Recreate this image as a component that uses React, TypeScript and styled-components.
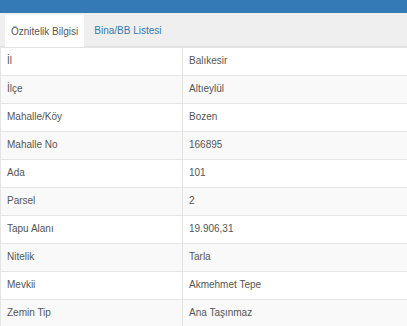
import { Fragment } from 'react';
import styled, { createGlobalStyle } from 'styled-components';

const GlobalStyle = createGlobalStyle`
  body {
    margin: 0;
    font-family: "Liberation Sans", Arial, sans-serif;
    background: #fff;
  }
`;

const Page = styled.div`
  width: 407px;
  height: 326px;
  overflow: hidden;
`;

const TopBar = styled.div`
  height: 13px;
  background: #337ab7;
`;

const Tabs = styled.div`
  display: flex;
  align-items: flex-end;
  height: 34px;
  padding-left: 5px;
  background: #efefef;
  border-bottom: 1px solid #e2e2e2;
  box-sizing: border-box;
`;

const Tab = styled.div<{ $active?: boolean }>`
  display: flex;
  align-items: center;
  margin-bottom: ${(p) => (p.$active ? '-1px' : '0')};
  font-size: 10px;
  color: ${(p) => (p.$active ? '#555' : '#337ab7')};
  background: ${(p) => (p.$active ? '#fff' : 'transparent')};
  height: ${(p) => (p.$active ? '32px' : '31px')};
  padding: ${(p) => (p.$active ? '0 6px' : '0 10px')};
`;

const Table = styled.div`
  display: grid;
  grid-template-columns: 181px 1fr;
  border-left: 1px solid #e4e4e4;
`;

const Cell = styled.div<{ $striped?: boolean; $value?: boolean }>`
  height: 28px;
  box-sizing: border-box;
  display: flex;
  align-items: center;
  padding-left: 6px;
  padding-bottom: 2px;
  font-size: 10px;
  color: #555;
  background: ${(p) => (p.$striped ? '#f9f9f9' : '#fff')};
  border-top: 1px solid #e4e4e4;
  border-left: ${(p) => (p.$value ? '1px solid #e4e4e4' : 'none')};
`;

const rows: [string, string][] = [
  ['İl', 'Balıkesir'],
  ['İlçe', 'Altıeylül'],
  ['Mahalle/Köy', 'Bozen'],
  ['Mahalle No', '166895'],
  ['Ada', '101'],
  ['Parsel', '2'],
  ['Tapu Alanı', '19.906,31'],
  ['Nitelik', 'Tarla'],
  ['Mevkii', 'Akmehmet Tepe'],
  ['Zemin Tip', 'Ana Taşınmaz'],
];

export default function App() {
  return (
    <Page>
      <GlobalStyle />
      <TopBar />
      <Tabs>
        <Tab $active>Öznitelik Bilgisi</Tab>
        <Tab>Bina/BB Listesi</Tab>
      </Tabs>
      <Table>
        {rows.map(([label, value], i) => (
          <Fragment key={label}>
            <Cell $striped={i % 2 === 1}>{label}</Cell>
            <Cell $striped={i % 2 === 1} $value>{value}</Cell>
          </Fragment>
        ))}
      </Table>
    </Page>
  );
}
